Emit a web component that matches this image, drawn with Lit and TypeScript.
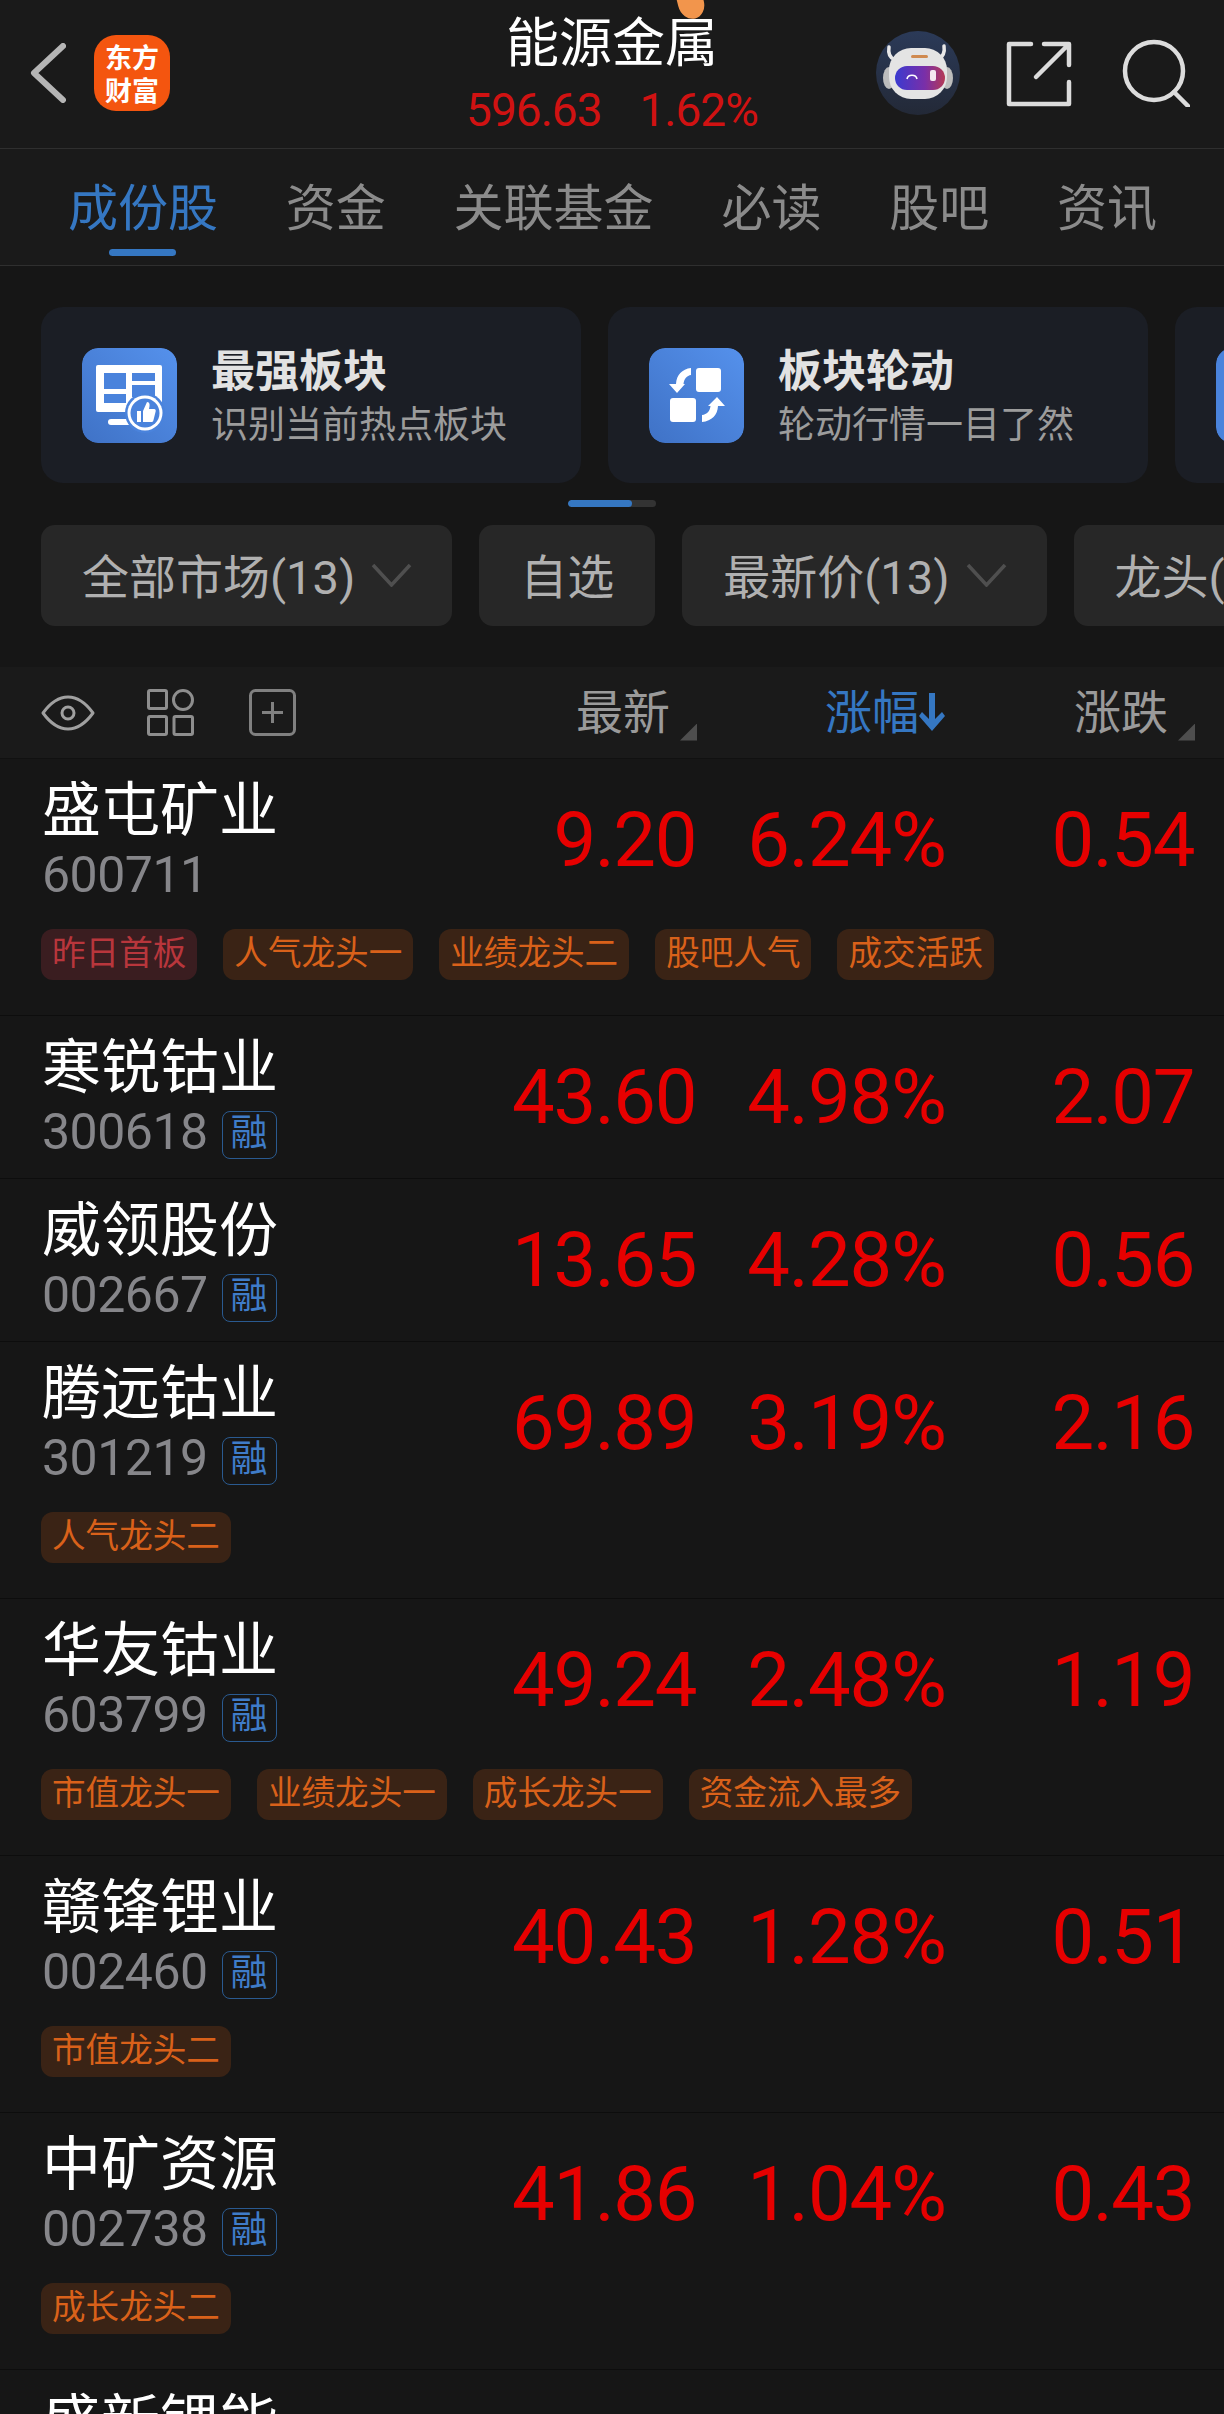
import { LitElement, css, html, nothing } from 'lit';
import { customElement } from 'lit/decorators.js';

type Tag = { text: string; red?: boolean };
type Stock = {
  name: string;
  code: string;
  price: string;
  pct: string;
  change: string;
  margin?: boolean;
  tags?: Tag[];
};

const tag = (text: string): Tag => ({ text });

const STOCKS: Stock[] = [
  {
    name: '盛屯矿业', code: '600711', price: '9.20', pct: '6.24%', change: '0.54',
    tags: [{ text: '昨日首板', red: true }, tag('人气龙头一'), tag('业绩龙头二'), tag('股吧人气'), tag('成交活跃')],
  },
  { name: '寒锐钴业', code: '300618', price: '43.60', pct: '4.98%', change: '2.07', margin: true },
  { name: '威领股份', code: '002667', price: '13.65', pct: '4.28%', change: '0.56', margin: true },
  { name: '腾远钴业', code: '301219', price: '69.89', pct: '3.19%', change: '2.16', margin: true, tags: [tag('人气龙头二')] },
  {
    name: '华友钴业', code: '603799', price: '49.24', pct: '2.48%', change: '1.19', margin: true,
    tags: [tag('市值龙头一'), tag('业绩龙头一'), tag('成长龙头一'), tag('资金流入最多')],
  },
  { name: '赣锋锂业', code: '002460', price: '40.43', pct: '1.28%', change: '0.51', margin: true, tags: [tag('市值龙头二')] },
  { name: '中矿资源', code: '002738', price: '41.86', pct: '1.04%', change: '0.43', margin: true, tags: [tag('成长龙头二')] },
];

const TABS = ['成份股', '资金', '关联基金', '必读', '股吧', '资讯'];

const chevron = html`<svg class="chev" viewBox="0 0 41 24" width="41" height="24">
  <polyline points="2,2 20.5,22 39,2" fill="none" stroke="#4f4f4f" stroke-width="3.5" />
</svg>`;

@customElement('app-root')
export class AppRoot extends LitElement {
  static styles = css`
    :host {
      display: block;
      width: 1224px;
      height: 2414px;
      overflow: hidden;
      background: #161616;
      font-family: Roboto, 'Noto Sans CJK SC', sans-serif;
      position: relative;
    }

    svg { display: block; flex: none; }

    .drop {
      position: absolute;
      left: 678px;
      top: -12px;
      width: 26px;
      height: 31px;
      background: #f2954c;
      border-radius: 35% 60% 55% 60%;
      transform: rotate(-14deg);
    }

    .topbar {
      height: 149px;
      box-sizing: border-box;
      border-bottom: 1px solid #2f2f2f;
      background: #1a1a1a;
      display: flex;
      align-items: flex-start;
      padding: 0 34px 0 30px;
    }

    .back { margin-top: 43px; }

    .logo {
      margin: 35px 0 0 28px;
      width: 76px;
      height: 76px;
      flex: none;
      box-sizing: border-box;
      padding-top: 5px;
      border-radius: 22px;
      background: #f4550f;
      color: #fff;
      font-size: 27px;
      font-weight: 700;
      line-height: 33px;
      text-align: center;
      font-family: 'Noto Sans CJK SC', sans-serif;
    }

    .title {
      flex: 1;
      display: flex;
      flex-direction: column;
      align-items: center;
      padding-left: 178px;
    }

    .title h1 {
      margin: 14px 0 0;
      font-size: 53px;
      line-height: 60px;
      font-weight: 400;
      color: #fff;
    }

    .title .quote {
      margin-top: 9px;
      display: flex;
      gap: 38px;
      font-size: 46px;
      line-height: 54px;
      font-weight: 400;
      letter-spacing: -1px;
      color: #d01212;
    }

    .top-actions {
      display: flex;
      align-items: flex-start;
    }

    .avatar { margin-top: 31px; }
    .share { margin: 41px 0 0 46px; }
    .search { margin: 39px 0 0 50px; }

    .tabs {
      position: relative;
      height: 117px;
      box-sizing: border-box;
      border-bottom: 1px solid #2f2f2f;
      background: #1a1a1a;
      display: flex;
      gap: 67.8px;
      padding: 27px 0 0 68px;
      font-size: 50px;
      line-height: 66px;
      color: #8b8b8b;
    }

    .tabs .on {
      color: #3577c2;
    }

    .tabs .on::after {
      content: '';
      position: absolute;
      left: 109px;
      top: 100px;
      width: 67px;
      height: 7px;
      border-radius: 4px;
      background: #3577c2;
    }

    .cards {
      display: flex;
      gap: 27px;
      padding: 41px 0 0 41px;
      overflow: hidden;
    }

    .card {
      flex: none;
      box-sizing: border-box;
      width: 540px;
      height: 176px;
      border-radius: 22px;
      background: #1b1e25;
      display: flex;
      align-items: center;
      gap: 34px;
      padding-left: 41px;
    }

    .card .icon {
      width: 95px;
      height: 95px;
      border-radius: 16px;
    }

    .card .text { padding-top: 6px; }

    .card h3 {
      margin: 0;
      font-size: 44px;
      line-height: 54px;
      font-weight: 700;
      color: #e2e2e2;
    }

    .card p {
      margin: 2px 0 0;
      font-size: 37px;
      line-height: 50px;
      color: #9c9c9c;
    }

    .pager {
      margin: 17px 0 0 568px;
      width: 88px;
      height: 7px;
      border-radius: 4px;
      background: #333;
      overflow: hidden;
    }

    .pager i {
      display: block;
      width: 64px;
      height: 7px;
      border-radius: 4px;
      background: #3577c2;
    }

    .filters {
      display: flex;
      gap: 27px;
      padding: 18px 0 0 41px;
      overflow: hidden;
    }

    .filter {
      flex: none;
      box-sizing: border-box;
      height: 101px;
      padding: 0 41px 5px;
      border-radius: 14px;
      background: #272727;
      display: flex;
      align-items: center;
      gap: 16px;
      font-size: 47px;
      color: #b0b0b0;
      white-space: nowrap;
    }

    .chev { margin: 3px -1px 0 0; }

    .thead {
      margin-top: 41px;
      height: 92px;
      box-sizing: border-box;
      background: #1a1a1a;
      border-bottom: 1px solid #111;
      display: grid;
      grid-template-columns: 1fr 248px 250px 248px;
      padding: 0 29px 0 41px;
      align-items: center;
    }

    .tools {
      display: flex;
      align-items: center;
    }

    .tools .grid { margin-left: 52px; }
    .tools .plus { margin-left: 55px; }

    .th {
      display: flex;
      justify-content: flex-end;
      align-items: flex-end;
      gap: 10px;
      font-size: 47px;
      line-height: 60px;
      color: #9a9a9a;
    }

    .th.sorted {
      color: #3577c2;
      align-items: center;
      gap: 0;
      padding-right: 2px;
    }

    .tri {
      width: 17px;
      height: 17px;
      margin-bottom: 2px;
      background: #4e4e4e;
      clip-path: polygon(100% 0, 100% 100%, 0 100%);
    }

    .row {
      box-sizing: border-box;
      border-bottom: 1px solid #0d0d0d;
    }

    .main {
      height: 162px;
      display: grid;
      grid-template-columns: 1fr 248px 250px 248px;
      padding: 0 30px 0 41px;
      align-items: center;
    }

    .info { padding-bottom: 2px; }

    .last {
      padding: 20px 0 0 41px;
    }

    .name {
      font-size: 59px;
      line-height: 66px;
      color: #fff;
      padding-left: 1px;
    }

    .code-line {
      margin-top: 6px;
      display: flex;
      align-items: center;
      gap: 14px;
      padding-left: 1px;
      height: 50px;
    }

    .code {
      font-size: 50px;
      line-height: 50px;
      font-weight: 400;
      letter-spacing: -0.5px;
      color: #86868a;
    }

    .badge {
      box-sizing: border-box;
      width: 55px;
      height: 48px;
      margin-top: 5px;
      border: 1px solid #2a5a90;
      border-radius: 8px;
      color: #3f7cc8;
      font-size: 37px;
      line-height: 44px;
      text-align: center;
    }

    .val {
      font-size: 76px;
      line-height: 80px;
      font-weight: 400;
      letter-spacing: -1.4px;
      color: #e60000;
      text-align: right;
      padding-bottom: 1px;
    }

    .val.pct { letter-spacing: -1px; }

    .tags {
      margin-top: 8px;
      padding: 0 0 35px 41px;
      display: flex;
      gap: 26px;
    }

    .tag {
      height: 51px;
      padding: 0 11px;
      border-radius: 12px;
      background: #3a2315;
      color: #d9611a;
      font-size: 33.6px;
      line-height: 50px;
      white-space: nowrap;
    }

    .tag.red {
      background: #3a1d20;
      color: #b8363c;
    }
  `;

  renderRow(s: Stock) {
    return html`
      <div class="row">
        <div class="main">
          <div class="info">
            <div class="name">${s.name}</div>
            <div class="code-line">
              <span class="code">${s.code}</span>
              ${s.margin ? html`<span class="badge">融</span>` : nothing}
            </div>
          </div>
          <div class="val">${s.price}</div>
          <div class="val pct">${s.pct}</div>
          <div class="val">${s.change}</div>
        </div>
        ${s.tags
          ? html`<div class="tags">
              ${s.tags.map((t) => html`<span class="tag ${t.red ? 'red' : ''}">${t.text}</span>`)}
            </div>`
          : nothing}
      </div>
    `;
  }

  render() {
    return html`
      <div class="drop"></div>
      <header class="topbar">
        <svg class="back" width="36" height="60" viewBox="0 0 36 60">
          <polyline points="33,3 4,30 33,57" fill="none" stroke="#b5b5b5" stroke-width="6" stroke-linecap="round" stroke-linejoin="round" />
        </svg>
        <div class="logo">东方<br />财富</div>
        <div class="title">
          <h1>能源金属</h1>
          <div class="quote"><span>596.63</span><span>1.62%</span></div>
        </div>
        <div class="top-actions">
          <svg class="avatar" width="84" height="84" viewBox="0 0 84 84">
            <defs>
              <linearGradient id="bg" x1="0" x2="0" y1="0" y2="1">
                <stop offset="0" stop-color="#2b3a58" />
                <stop offset="1" stop-color="#232937" />
              </linearGradient>
              <linearGradient id="visor" x1="0" x2="1" y1="0" y2="0">
                <stop offset="0" stop-color="#3a3ad0" />
                <stop offset="0.6" stop-color="#7a2fa8" />
                <stop offset="1" stop-color="#b53a55" />
              </linearGradient>
            </defs>
            <circle cx="42" cy="42" r="42" fill="url(#bg)" />
            <path d="M13 16c-1 6 1 11 6 13M68 15c1 6-1 11-6 14" fill="none" stroke="#e8e8e8" stroke-width="3.500" stroke-linecap="round" />
            <ellipse cx="13" cy="47" rx="6" ry="11" fill="#bdbdbd" />
            <ellipse cx="71" cy="47" rx="6" ry="11" fill="#bdbdbd" />
            <rect x="13" y="17" width="58" height="51" rx="22" fill="#e4e4e4" />
            <rect x="35" y="24" width="17" height="3" rx="1.500" fill="#d08a50" />
            <rect x="19" y="35" width="50" height="24" rx="12" fill="url(#visor)" />
            <path d="M31 48c1-5 9-5 10 0" fill="none" stroke="#fff" stroke-width="1.600" />
            <rect x="54" y="39" width="6" height="11" rx="2" fill="#f4e8f0" />
          </svg>
          <svg class="share" width="66" height="66" viewBox="0 0 66 66" fill="none" stroke="#dcdcdc" stroke-width="4.500" stroke-linecap="round" stroke-linejoin="round">
            <path d="M25 3H3V63H63V41" />
            <path d="M30 36L62 4M38 3H63V24" />
          </svg>
          <svg class="search" width="68" height="68" viewBox="0 0 68 68" fill="none" stroke="#dcdcdc" stroke-width="4.500" stroke-linecap="round">
            <circle cx="32" cy="32" r="29" />
            <path d="M52 53L66 67" />
          </svg>
        </div>
      </header>

      <nav class="tabs">
        ${TABS.map((t, i) => html`<span class=${i === 0 ? 'on' : ''}>${t}</span>`)}
      </nav>

      <section class="cards">
        <div class="card">
          <svg class="icon" viewBox="0 0 95 95">
            <defs>
              <linearGradient id="g1" x1="1" y1="0" x2="0" y2="1">
                <stop offset="0" stop-color="#5591ec" />
                <stop offset="1" stop-color="#3f72c6" />
              </linearGradient>
            </defs>
            <rect width="95" height="95" rx="16" fill="url(#g1)" />
            <rect x="14" y="17" width="66" height="47" rx="2" fill="#fff" />
            <path fill="#4a83dc" d="M22 25h22v16H22zM50 25h23v8H50zM22 46h22v9H22zM50 37h23v12H50z" />
            <rect x="26" y="71" width="28" height="6" rx="3" fill="#fff" />
            <circle cx="63" cy="65" r="20" fill="#4a83dc" />
            <circle cx="63" cy="65" r="17.500" fill="#fff" />
            <circle cx="63" cy="65" r="14.500" fill="#4a83dc" />
            <path fill="#fff" d="M55 63h4v11h-4zM61 63l4-9c3 0 3 3 2 7h5c2 0 2 2 1.500 3l-2 8c-.5 2-1 2-3 2H61z" />
          </svg>
          <div class="text"><h3>最强板块</h3><p>识别当前热点板块</p></div>
        </div>
        <div class="card">
          <svg class="icon" viewBox="0 0 95 95">
            <defs>
              <linearGradient id="g2" x1="1" y1="0" x2="0" y2="1">
                <stop offset="0" stop-color="#5591ec" />
                <stop offset="1" stop-color="#3f72c6" />
              </linearGradient>
            </defs>
            <rect width="95" height="95" rx="16" fill="url(#g2)" />
            <rect x="47" y="20" width="25" height="24" rx="3" fill="#fff" />
            <rect x="21" y="50" width="26" height="24" rx="3" fill="#fff" />
            <path fill="#fff" d="M42 20v7c-4 .5-7 4-7.500 9H36l-8 9-8-9h7c.5-9 6-15 15-16z" />
            <path fill="#fff" d="M53 74v-7c5-.5 8-4 8.500-9H59l9-9 8 9h-7c-.5 9-6 15-16 16z" />
          </svg>
          <div class="text"><h3>板块轮动</h3><p>轮动行情一目了然</p></div>
        </div>
        <div class="card">
          <svg class="icon" viewBox="0 0 95 95">
            <rect width="95" height="95" rx="16" fill="#4a83dc" />
          </svg>
        </div>
      </section>

      <div class="pager"><i></i></div>

      <section class="filters">
        <div class="filter">全部市场(13)${chevron}</div>
        <div class="filter">自选</div>
        <div class="filter">最新价(13)${chevron}</div>
        <div class="filter">龙头(13)${chevron}</div>
      </section>

      <div class="thead">
        <div class="tools">
          <svg width="54" height="36" viewBox="0 0 54 36" fill="none" stroke="#a0a0a0" stroke-width="3">
            <path d="M2 18C10 7 18 2 27 2s17 5 25 16c-8 11-16 16-25 16S10 29 2 18z" stroke-linejoin="round" />
            <circle cx="27" cy="18" r="6" />
          </svg>
          <svg class="grid" width="47" height="47" viewBox="0 0 47 47" fill="none" stroke="#8e8e8e" stroke-width="3">
            <rect x="1.500" y="1.500" width="18" height="18" rx="1.500" />
            <circle cx="36" cy="11" r="9.500" />
            <rect x="1.500" y="27.500" width="18" height="18" rx="1.500" />
            <rect x="27" y="27.500" width="18.500" height="18" rx="1.500" />
          </svg>
          <svg class="plus" width="47" height="47" viewBox="0 0 47 47" fill="none" stroke="#808080" stroke-width="3">
            <rect x="1.500" y="1.500" width="44" height="44" rx="5" />
            <path d="M23.500 13v21M13 23.500h21" />
          </svg>
        </div>
        <div class="th">最新<span class="tri"></span></div>
        <div class="th sorted">
          涨幅<svg width="26" height="40" viewBox="0 0 26 40"><path fill="#3577c2" d="M10 0h6v26l7-7 3 4-13 15L0 23l3-4 7 7z" /></svg>
        </div>
        <div class="th">涨跌<span class="tri"></span></div>
      </div>

      ${STOCKS.map((s) => this.renderRow(s))}
      <div class="last"><div class="name">盛新锂能</div></div>
    `;
  }
}
